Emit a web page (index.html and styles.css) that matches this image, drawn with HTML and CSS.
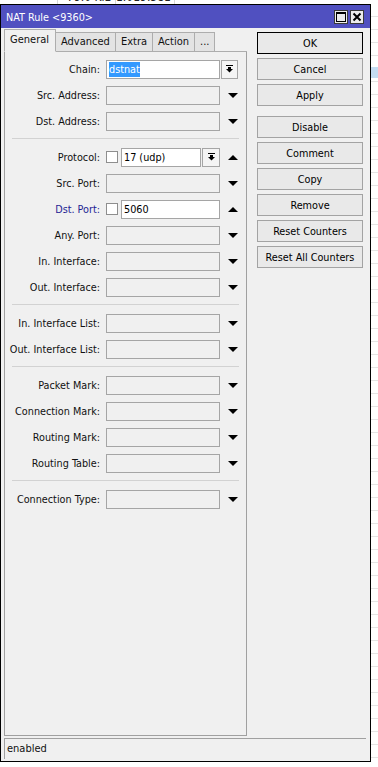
FILE: index.html
```html
<!DOCTYPE html>
<html lang="en">
<head>
  <meta charset="UTF-8" />
  <meta name="viewport" content="width=device-width, initial-scale=1.0"/>
  <title>NAT Rule &lt;9360&gt;</title>
  <link rel="stylesheet" href="styles.css">
</head>
<body>

  <div class="screen">
    <div class="behind-top">
      <span class="cell c1"></span>
      <span class="cell c2">79.0 KiB</span>
      <span class="cell c3">1.019.581</span>
    </div>

    <div class="desk">
      <div class="window">
        <div class="titlebar">
          <span class="title">NAT Rule &lt;9360&gt;</span>
          <div class="tb-btns">
            <span class="tb-btn">
              <svg width="10" height="10" viewBox="0 0 10 10"><rect x="0.5" y="0.5" width="9" height="9" fill="none" stroke="#000"/><rect x="0" y="0" width="10" height="2" fill="#000"/></svg>
            </span>
            <span class="tb-btn">
              <svg width="10" height="10" viewBox="0 0 10 10"><path d="M1.5 1.5 L8.5 8.5 M8.5 1.5 L1.5 8.5" stroke="#000" stroke-width="2"/></svg>
            </span>
          </div>
        </div>

        <div class="content">
          <div class="main">
            <div class="left">
              <div class="tabs">
                <span class="tab active">General</span>
                <span class="tab">Advanced</span>
                <span class="tab">Extra</span>
                <span class="tab">Action</span>
                <span class="tab">...</span>
                <span class="tab-fill"></span>
              </div>

              <div class="panel">
                <div class="row">
                  <label>Chain:</label>
                  <div class="field"><span class="input filled"><span class="sel">dstnat</span></span></div>
                  <span class="dropbtn"><svg width="7" height="8" viewBox="0 0 7 8"><rect x="0" y="0" width="7" height="1" fill="#000"/><rect x="2" y="2" width="3" height="2" fill="#000"/><path d="M0 4 H7 L3.5 7.5 Z" fill="#000"/></svg></span>
                </div>
                <div class="row">
                  <label>Src. Address:</label>
                  <div class="field"><span class="input"></span></div>
                  <span class="arrow down"></span>
                </div>
                <div class="row">
                  <label>Dst. Address:</label>
                  <div class="field"><span class="input"></span></div>
                  <span class="arrow down"></span>
                </div>

                <div class="sep"></div>

                <div class="row">
                  <label>Protocol:</label>
                  <div class="field">
                    <span class="check"></span>
                    <span class="input filled">17 (udp)</span>
                    <span class="dropbtn small"><svg width="7" height="8" viewBox="0 0 7 8"><rect x="0" y="0" width="7" height="1" fill="#000"/><rect x="2" y="2" width="3" height="2" fill="#000"/><path d="M0 4 H7 L3.5 7.5 Z" fill="#000"/></svg></span>
                  </div>
                  <span class="arrow up"></span>
                </div>
                <div class="row">
                  <label>Src. Port:</label>
                  <div class="field"><span class="input"></span></div>
                  <span class="arrow down"></span>
                </div>
                <div class="row">
                  <label class="set">Dst. Port:</label>
                  <div class="field">
                    <span class="check"></span>
                    <span class="input filled">5060</span>
                  </div>
                  <span class="arrow up"></span>
                </div>
                <div class="row">
                  <label>Any. Port:</label>
                  <div class="field"><span class="input"></span></div>
                  <span class="arrow down"></span>
                </div>
                <div class="row">
                  <label>In. Interface:</label>
                  <div class="field"><span class="input"></span></div>
                  <span class="arrow down"></span>
                </div>
                <div class="row">
                  <label>Out. Interface:</label>
                  <div class="field"><span class="input"></span></div>
                  <span class="arrow down"></span>
                </div>

                <div class="sep"></div>

                <div class="row">
                  <label>In. Interface List:</label>
                  <div class="field"><span class="input"></span></div>
                  <span class="arrow down"></span>
                </div>
                <div class="row">
                  <label>Out. Interface List:</label>
                  <div class="field"><span class="input"></span></div>
                  <span class="arrow down"></span>
                </div>

                <div class="sep"></div>

                <div class="row">
                  <label>Packet Mark:</label>
                  <div class="field"><span class="input"></span></div>
                  <span class="arrow down"></span>
                </div>
                <div class="row">
                  <label>Connection Mark:</label>
                  <div class="field"><span class="input"></span></div>
                  <span class="arrow down"></span>
                </div>
                <div class="row">
                  <label>Routing Mark:</label>
                  <div class="field"><span class="input"></span></div>
                  <span class="arrow down"></span>
                </div>
                <div class="row">
                  <label>Routing Table:</label>
                  <div class="field"><span class="input"></span></div>
                  <span class="arrow down"></span>
                </div>

                <div class="sep"></div>

                <div class="row">
                  <label>Connection Type:</label>
                  <div class="field"><span class="input"></span></div>
                  <span class="arrow down"></span>
                </div>
              </div>
            </div>

            <div class="actions">
              <button class="default">OK</button>
              <button>Cancel</button>
              <button>Apply</button>
              <button class="gap">Disable</button>
              <button>Comment</button>
              <button>Copy</button>
              <button>Remove</button>
              <button>Reset Counters</button>
              <button>Reset All Counters</button>
            </div>
          </div>

          <div class="status">enabled</div>
        </div>
      </div>

      <div class="behind-side"></div>
    </div>
  </div>

</body>
</html>
```

FILE: styles.css
```css
body {
  margin: 0;
  font-family: "DejaVu Sans Condensed", "Liberation Sans", Arial, sans-serif;
  font-size: 10.75px;
  color: #000;
  background: #fff;
}

.screen {
  width: 378px;
  height: 767px;
  overflow: hidden;
}

/* list window peeking out behind the dialog */
.behind-top {
  height: 4px;
  overflow: hidden;
  display: flex;
}

.behind-top .cell {
  width: 58px;
  border-right: 1px solid #d8d8d8;
  font-size: 12px;
  line-height: 13px;
  margin-top: -9px;
  text-align: right;
  padding-right: 3px;
  box-sizing: border-box;
  color: #222;
  white-space: nowrap;
}

.behind-top .c3 {
  width: 59px;
  padding-right: 5px;
}

.desk {
  display: flex;
  height: 763px;
}

.behind-side {
  flex: 1;
  background:
    linear-gradient(#c4dcf2, #c4dcf2) 0 63px / 100% 11px no-repeat,
    repeating-linear-gradient(to bottom, #fff 0 12px, #e4e4e4 12px 13px);
}

/* dialog */
.window {
  width: 369px;
  height: 756px;
  border: 1px solid #000;
  background: #f0f0f0;
  display: flex;
  flex-direction: column;
}

.titlebar {
  height: 23px;
  background: #5050c0;
  color: #fff;
  display: flex;
  align-items: center;
  justify-content: space-between;
  padding: 0 6px 0 5px;
}

.title {
  padding-top: 1px;
}

.tb-btns {
  display: flex;
  gap: 2px;
  padding-top: 1px;
}

.tb-btn {
  width: 14px;
  height: 14px;
  box-sizing: border-box;
  background: #ececec;
  border: 1px solid #3a3a3a;
  display: flex;
  align-items: center;
  justify-content: center;
}

.content {
  flex: 1;
  display: flex;
  flex-direction: column;
  padding: 0 4px 2px 3px;
}

.main {
  flex: 1;
  display: flex;
  gap: 10px;
}

.left {
  width: 243px;
  display: flex;
  flex-direction: column;
}

.tabs {
  height: 24px;
  display: flex;
  align-items: flex-end;
}

.tab {
  height: 18px;
  line-height: 18px;
  padding: 0 5px;
  background: #e3e3e3;
  border: 1px solid #adadad;
  border-left: none;
  color: #111;
  font-size: 11px;
}

.tab.active {
  height: 21px;
  line-height: 20px;
  padding: 0 6px 0 5px;
  background: #f0f0f0;
  border-left: 1px solid #adadad;
  border-bottom-color: #f0f0f0;
}

.tab-fill {
  flex: 1;
  border-bottom: 1px solid #adadad;
}

.panel {
  flex: 1;
  border: 1px solid #a0a0a0;
  border-top: none;
  padding-top: 4px;
}

.row {
  height: 26px;
  display: grid;
  grid-template-columns: 95px 114px 18px;
  column-gap: 6px;
  align-items: center;
}

.row > :last-child {
  margin-left: -5px;
}

.row label {
  text-align: right;
  white-space: nowrap;
  color: #111;
}

.row label.set {
  color: #1e1e94;
}

.field {
  display: flex;
  align-items: center;
  height: 19px;
}

.input {
  flex: 1;
  height: 19px;
  box-sizing: border-box;
  border: 1px solid #a5a5a5;
  background: #f0f0f0;
  line-height: 17px;
  padding: 0 2px;
  white-space: nowrap;
}

.input.filled {
  background: #fff;
}

.sel {
  background: #3399ff;
  color: #fff;
  padding: 1px 0;
}

.check {
  width: 12px;
  height: 12px;
  box-sizing: border-box;
  border: 1px solid #8e8e8e;
  background: #fff;
  margin-right: 3px;
}

.dropbtn {
  width: 17px;
  height: 19px;
  box-sizing: border-box;
  border: 1px solid #a5a5a5;
  background: #f4f4f4;
  display: flex;
  align-items: center;
  justify-content: center;
}

.dropbtn.small {
  width: 18px;
  margin-left: 1px;
}

.arrow {
  width: 0;
  height: 0;
  justify-self: center;
  border-left: 5px solid transparent;
  border-right: 5px solid transparent;
}

.arrow.down {
  border-top: 5px solid #000;
}

.arrow.up {
  border-bottom: 5px solid #000;
}

.sep {
  border-top: 1px solid #d2d2d2;
  margin: 4px 7px 5px;
}

.actions {
  width: 106px;
  display: flex;
  flex-direction: column;
  gap: 4px;
  padding-top: 4px;
}

.actions button {
  height: 22px;
  font-family: inherit;
  font-size: 10.75px;
  color: #000;
  background: #e9e9e9;
  border: 1px solid #a3a3a3;
  padding: 0;
}

.actions button.default {
  border-color: #000;
}

.actions button.gap {
  margin-top: 6px;
}

.status {
  height: 21px;
  margin-top: 2px;
  box-sizing: border-box;
  border-top: 1px solid #a0a0a0;
  border-left: 1px solid #a0a0a0;
  line-height: 20px;
  padding-left: 2px;
  color: #111;
  font-size: 11px;
}
```
